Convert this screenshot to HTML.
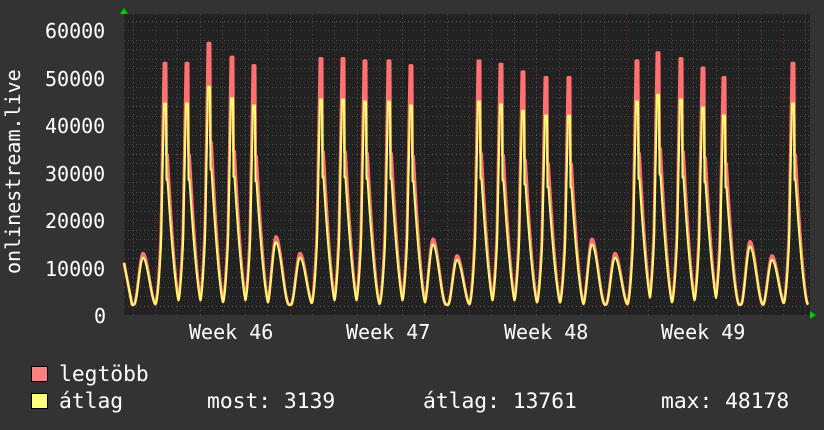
<!DOCTYPE html>
<html><head><meta charset="utf-8"><style>
html,body{margin:0;padding:0;background:#333;}
svg{display:block}
text{font-family:"DejaVu Sans Mono","Liberation Mono",monospace;fill:#fff;font-size:20px}
.lg{font-size:21.3px}
</style></head><body>
<svg id="s" width="824" height="430" xmlns="http://www.w3.org/2000/svg">
<rect width="824" height="430" fill="#333"/>
<rect x="124" y="14" width="686" height="301" fill="#222"/>
<g id="grid"></g>
<g id="data"></g>
<path d="M120 14 L128 14 L124 8 Z" fill="#0c0"/>
<path d="M810 311 L810 319 L816 315 Z" fill="#0c0"/>
<text x="45" y="38">60000</text>
<text x="45" y="86">50000</text>
<text x="45" y="133">40000</text>
<text x="45" y="181">30000</text>
<text x="45" y="228">20000</text>
<text x="45" y="276">10000</text>
<text x="94" y="323">0</text>
<text transform="translate(20,274) rotate(-90)">onlinestream.live</text>
<text x="189" y="339">Week 46</text>
<text x="346" y="339">Week 47</text>
<text x="504" y="339">Week 48</text>
<text x="661" y="339">Week 49</text>
<rect x="31.5" y="366.5" width="16" height="15" fill="#ff8080" stroke="#000"/>
<rect x="31.5" y="393.5" width="16" height="15" fill="#ffff80" stroke="#000"/>
<text class="lg" x="59" y="381">legtöbb</text>
<text class="lg" x="59" y="408">átlag</text>
<text class="lg" x="207" y="408">most: 3139</text>
<text class="lg" x="423" y="408">átlag: 13761</text>
<text class="lg" x="661" y="408">max: 48178</text>
</svg>
<script>
var NS="http://www.w3.org/2000/svg",g=document.getElementById('grid'),d=document.getElementById('data');
function ln(x1,y1,x2,y2,c,dash,w){var l=document.createElementNS(NS,'line');l.setAttribute('x1',x1);l.setAttribute('y1',y1);l.setAttribute('x2',x2);l.setAttribute('y2',y2);l.setAttribute('stroke',c);l.setAttribute('stroke-width',w||1);if(dash)l.setAttribute('stroke-dasharray',dash);g.appendChild(l);}
function Y(v){return 315-v*285/60000;}
for(var v=2000;v<=62000;v+=2000){var y=Math.round(Y(v))+.5;if(y<14)break;ln(124,y,810,y,v%10000?'#555':'#733','1,3');}
for(var k=-1;k<32;k++){var x=155+k*22.43;if(x<125||x>809)continue;x=Math.round(x)+.5;ln(x,14,x,315,k%7==0?'#733':'#555','1,3');}
var peaks=[[143,13000],[164,53000],[186,53000],[208,57200],[231,54300],[253,52500],[276,16500],[300,13000],[320,54000],[342,54000],[364,53500],[388,53500],[410,52500],[433,16000],[457,12500],[478,53500],[500,52800],[522,51200],[545,50000],[568,50000],[592,16000],[615,13000],[636,53500],[657,55200],[680,54000],[702,52000],[723,50000],[750,15500],[772,12500],[792,53000]];
function val(x,mul){var best=2200;for(var i=0;i<peaks.length;i++){var p=peaks[i][0],P=peaks[i][1],dx=x-p,f;
 if(dx<-10||dx>18)continue;
 if(P>30000){if(dx<-3)f=Math.max(0,(dx+9)/6);f=(dx<-3)?f*f*0.3:(dx<0?0.3+0.7*(dx+3)/3:(dx<2.5?1:(dx<4?0.62:0.58*Math.pow(Math.max(0,1-(dx-4)/12),1.6))));}
 else{if(dx<0)f=Math.max(0,(dx+9)/9);else f=Math.max(0,1-dx/13);f=f*f*(3-2*f);}
 var pv=P>30000?(mul?P*0.84:P):(mul?P*0.93:P);best=Math.max(best,2200+(pv-2200)*f);}
 if(x<132)best=Math.max(best,11000-(x-124)*1100);return best;}
function poly(c,mul,w){var pts=[];for(var x=124;x<=808;x+=0.5)pts.push(x+','+Y(val(x,mul)).toFixed(1));var p=document.createElementNS(NS,'polyline');p.setAttribute('points',pts.join(' '));p.setAttribute('fill','none');p.setAttribute('stroke',c);p.setAttribute('stroke-width',w);p.setAttribute('stroke-linejoin','round');d.appendChild(p);}
poly('#ff7070',0,3);poly('#ffff70',1,2);
</script>
</body></html>
